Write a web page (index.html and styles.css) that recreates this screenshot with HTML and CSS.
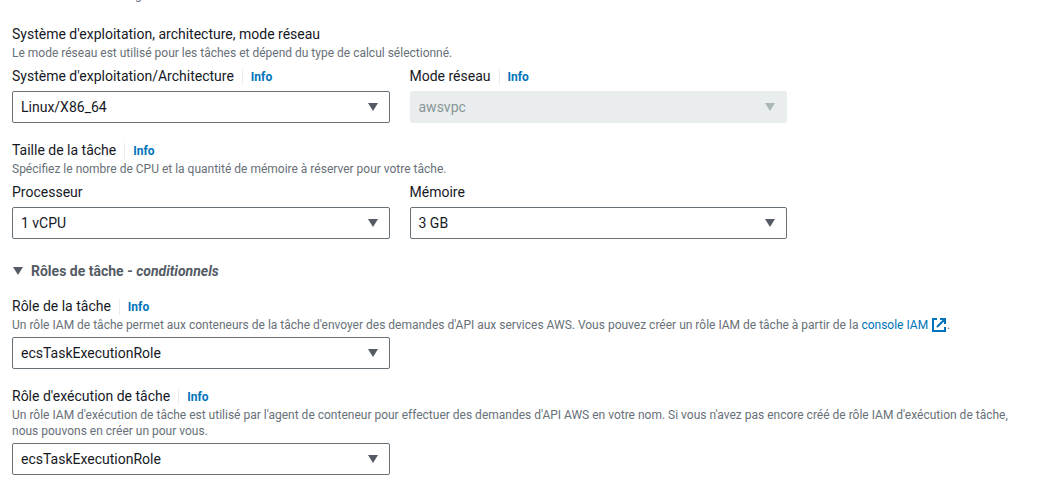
FILE: index.html
```html
<!DOCTYPE html>
<html lang="fr">
<head>
<meta charset="utf-8">
<title>Rôles de tâche</title>
<link rel="stylesheet" href="styles.css">
</head>
<body>
<main class="form">
  <p class="hint hint-clipped">g</p>

  <section class="group">
    <h2 class="label">Système d'exploitation, architecture, mode réseau</h2>
    <p class="hint">Le mode réseau est utilisé pour les tâches et dépend du type de calcul sélectionné.</p>
    <div class="columns">
      <div class="field">
        <div class="label-row"><label class="label" for="os">Système d'exploitation/Architecture</label><a class="info" href="#">Info</a></div>
        <div class="select-wrap"><select class="select" id="os"><option>Linux/X86_64</option></select><svg class="caret" viewBox="0 0 10 8" aria-hidden="true"><path d="M0 0h10L5 8z"/></svg></div>
      </div>
      <div class="field">
        <div class="label-row"><label class="label" for="network">Mode réseau</label><a class="info" href="#">Info</a></div>
        <div class="select-wrap"><select class="select" id="network" disabled><option>awsvpc</option></select><svg class="caret" viewBox="0 0 10 8" aria-hidden="true"><path d="M0 0h10L5 8z"/></svg></div>
      </div>
    </div>
  </section>

  <section class="group">
    <div class="label-row"><h2 class="label">Taille de la tâche</h2><a class="info" href="#">Info</a></div>
    <p class="hint">Spécifiez le nombre de CPU et la quantité de mémoire à réserver pour votre tâche.</p>
    <div class="columns">
      <div class="field">
        <div class="label-row"><label class="label" for="cpu">Processeur</label></div>
        <div class="select-wrap"><select class="select" id="cpu"><option>1 vCPU</option></select><svg class="caret" viewBox="0 0 10 8" aria-hidden="true"><path d="M0 0h10L5 8z"/></svg></div>
      </div>
      <div class="field">
        <div class="label-row"><label class="label" for="memory">Mémoire</label></div>
        <div class="select-wrap"><select class="select" id="memory"><option>3 GB</option></select><svg class="caret" viewBox="0 0 10 8" aria-hidden="true"><path d="M0 0h10L5 8z"/></svg></div>
      </div>
    </div>
  </section>

  <button class="expander" type="button" aria-expanded="true"><svg class="expander-icon" viewBox="0 0 10 8" aria-hidden="true"><path d="M0 0h10L5 8z"/></svg><span>Rôles de tâche - <em>conditionnels</em></span></button>

  <section class="group">
    <div class="label-row"><label class="label" for="task-role">Rôle de la tâche</label><a class="info" href="#">Info</a></div>
    <p class="hint">Un rôle IAM de tâche permet aux conteneurs de la tâche d'envoyer des demandes d'API aux services AWS. Vous pouvez créer un rôle IAM de tâche à partir de la <a class="link" href="#">console IAM <svg class="external" viewBox="0 0 14 14" aria-hidden="true"><path d="M5 1H1v12h12V9M8 1h5v5M13 1L5 9"/></svg></a>.</p>
    <div class="columns">
      <div class="select-wrap"><select class="select" id="task-role"><option>ecsTaskExecutionRole</option></select><svg class="caret" viewBox="0 0 10 8" aria-hidden="true"><path d="M0 0h10L5 8z"/></svg></div>
    </div>
  </section>

  <section class="group">
    <div class="label-row"><label class="label" for="exec-role">Rôle d'exécution de tâche</label><a class="info" href="#">Info</a></div>
    <p class="hint">Un rôle IAM d'exécution de tâche est utilisé par l'agent de conteneur pour effectuer des demandes d'API AWS en votre nom. Si vous n'avez pas encore créé de rôle IAM d'exécution de tâche, nous pouvons en créer un pour vous.</p>
    <div class="columns">
      <div class="select-wrap"><select class="select" id="exec-role"><option>ecsTaskExecutionRole</option></select><svg class="caret" viewBox="0 0 10 8" aria-hidden="true"><path d="M0 0h10L5 8z"/></svg></div>
    </div>
  </section>
</main>
</body>
</html>
```
FILE: styles.css
```css
* { box-sizing: border-box; }

body {
  margin: 0;
  overflow-x: hidden;
  background: #fff;
  color: #16191f;
  font: 14px/22px Roboto, "Noto Sans", sans-serif;
}

.form { padding: 0 24px 16px 12px; }

.label { margin: 0; font-size: 14px; font-weight: 400; line-height: 22px; }

.label-row { display: flex; align-items: baseline; }

.info {
  margin-left: 8px;
  padding-left: 8px;
  border-left: 1px solid #eaeded;
  color: #0073bb;
  font-size: 12px;
  font-weight: 700;
  line-height: 16px;
  text-decoration: none;
}

.hint { margin: 0; color: #687078; font-size: 12px; line-height: 16px; }

.hint-clipped { margin: -13px 0 20px; padding-left: 123px; }

.group { margin-bottom: 16px; }

.columns {
  display: grid;
  grid-template-columns: 1fr 1fr;
  gap: 20px;
  max-width: 775px;
  margin-top: 4px;
}

.select-wrap { display: grid; align-items: center; }

.field .select-wrap { margin-top: 4px; }

.select, .caret { grid-area: 1 / 1; }

.select {
  width: 100%;
  height: 32px;
  padding: 0 32px 0 8px;
  border: 1px solid #687078;
  border-radius: 2px;
  background: #fff;
  color: #16191f;
  font: inherit;
  appearance: none;
}

.select:disabled {
  border-color: #eaeded;
  background: #eaeded;
  color: #879596;
  opacity: 1;
}

.caret {
  justify-self: end;
  width: 10px;
  height: 8px;
  margin-right: 12px;
  fill: #545b64;
  pointer-events: none;
}

.select:disabled + .caret { fill: #aab7b8; }

.expander {
  display: flex;
  align-items: center;
  gap: 8px;
  margin: 21px 0 13px;
  padding: 0 1px;
  border: 0;
  background: none;
  color: #545b64;
  font: inherit;
  font-weight: 700;
}

.expander-icon { width: 10px; height: 8px; fill: #545b64; }

.link { color: #0073bb; text-decoration: none; }

.external {
  width: 14px;
  height: 14px;
  margin: 0 1px;
  vertical-align: -3px;
  fill: none;
  stroke: #0073bb;
  stroke-width: 2;
}
```
